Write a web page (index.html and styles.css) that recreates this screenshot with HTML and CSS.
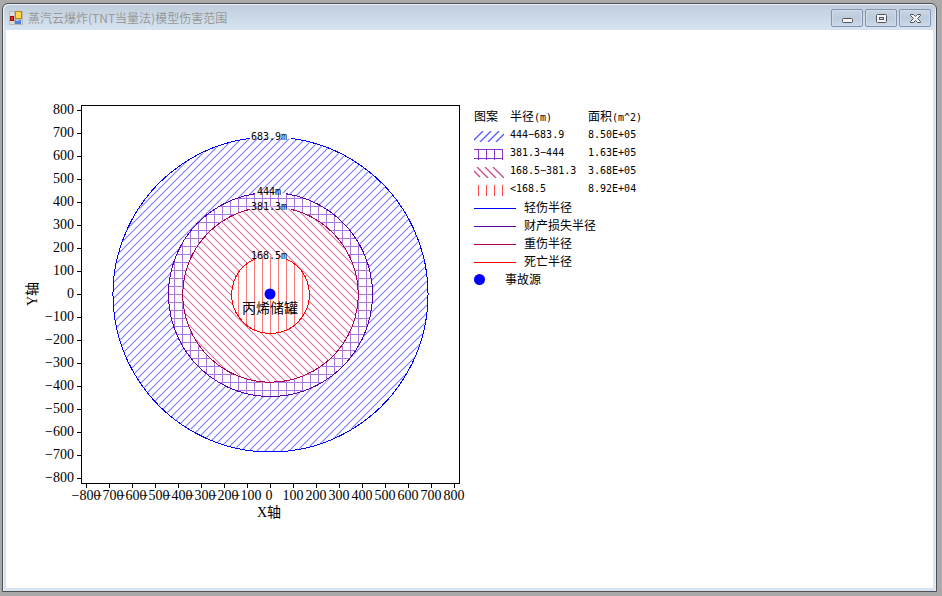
FILE: index.html
```html
<!DOCTYPE html>
<html lang="zh-CN">
<head>
<meta charset="utf-8">
<title>蒸汽云爆炸(TNT当量法)模型伤害范围</title>
<link rel="stylesheet" href="styles.css">
</head>
<body>
<div class="window">
  <header class="titlebar">
    <svg class="app-icon" width="14" height="14" viewBox="0 0 14 14" aria-hidden="true">
      <path d="M.5 4.500V.5H13.500V13.500H.5Z" fill="#dcdcdc" stroke="#b8b8b8"/>
      <path d="M5.500 1v12M1 8.500h12" stroke="#b8b8b8"/>
      <rect x="6.500" y=".5" width="6" height="7" fill="#ffd54a" stroke="#b88a12"/>
      <rect x="1.500" y="5.500" width="3" height="4" fill="#e03020" stroke="#980c0c"/>
      <rect x="6" y="9" width="6" height="4" fill="#4f82d8"/>
      <rect x="7" y="9" width="3" height="1" fill="#a8c8f8"/>
    </svg>
    <h1 class="title">蒸汽云爆炸(TNT当量法)模型伤害范围</h1>
    <div class="controls">
      <button type="button" class="control" aria-label="最小化">
        <svg width="13" height="11" viewBox="0 0 13 11"><rect x="1.500" y="5.500" width="10" height="4" rx="1" fill="#f4f4f4" stroke="#50545e"/></svg>
      </button>
      <button type="button" class="control" aria-label="最大化">
        <svg width="13" height="11" viewBox="0 0 13 11"><rect x="1.500" y="1.500" width="10" height="8" rx="1" fill="#f4f4f4" stroke="#50545e"/><rect x="4.500" y="4.500" width="4" height="2" fill="#c8d4e2" stroke="#50545e"/></svg>
      </button>
      <button type="button" class="control" aria-label="关闭">
        <svg width="13" height="11" viewBox="0 0 13 11"><path d="M1.500 1.500h3l2 2 2-2h3v1L8.500 5.500l3 3v1h-3l-2-2-2 2h-3v-1l3-3-3-3z" fill="#f4f4f4" stroke="#50545e"/></svg>
      </button>
    </div>
  </header>
  <main class="client">
    <svg class="chart" width="448" height="428" viewBox="24 100 448 428" role="img" aria-label="伤害范围图">
      <defs>
        <pattern id="hatch-minor" x="2" y="2" width="8" height="8" patternUnits="userSpaceOnUse">
          <path d="M-1 9L9-1M-1 1L1-1M7 9L9 7" stroke="#8080ff" stroke-width="1.2"/>
        </pattern>
        <pattern id="hatch-property" x="6" y="6" width="8" height="8" patternUnits="userSpaceOnUse">
          <path d="M0 .5H8M.5 0V8" stroke="#aa77dd"/>
        </pattern>
        <pattern id="hatch-severe" x="6" y="6" width="8" height="8" patternUnits="userSpaceOnUse">
          <path d="M-1-1L9 9M-1 7L1 9M7-1L9 1" stroke="#dd77a4" stroke-width="1.2"/>
        </pattern>
        <pattern id="hatch-death" x="6" y="6" width="8" height="8" patternUnits="userSpaceOnUse">
          <path d="M.5 0V8" stroke="#ff7777"/>
        </pattern>
      </defs>

      <!-- plot frame and tick marks -->
      <g class="axis-line">
        <rect x="81.500" y="105.500" width="378" height="378"/>
        <path d="M77 110.500h4M77 133.500h4M77 156.500h4M77 179.500h4M77 202.500h4M77 225.500h4M77 248.500h4M77 271.500h4M77 294.500h4M77 317.500h4M77 340.500h4M77 363.500h4M77 386.500h4M77 409.500h4M77 432.500h4M77 455.500h4M77 478.500h4"/>
        <path d="M86.500 484v4M109.500 484v4M132.500 484v4M155.500 484v4M178.500 484v4M201.500 484v4M224.500 484v4M247.500 484v4M270.500 484v4M293.500 484v4M316.500 484v4M339.500 484v4M362.500 484v4M385.500 484v4M408.500 484v4M431.500 484v4M454.500 484v4"/>
      </g>

      <!-- damage zones, outermost first -->
      <circle cx="270.500" cy="294.500" r="157" fill="url(#hatch-minor)"/>
      <circle cx="270.500" cy="294.500" r="102" fill="#fff"/>
      <circle cx="270.500" cy="294.500" r="102" fill="url(#hatch-property)"/>
      <circle cx="270.500" cy="294.500" r="88" fill="#fff"/>
      <circle cx="270.500" cy="294.500" r="88" fill="url(#hatch-severe)"/>
      <circle cx="270.500" cy="294.500" r="39" fill="#fff"/>
      <circle cx="270.500" cy="294.500" r="39" fill="url(#hatch-death)"/>

      <!-- outlines, open at the top for their labels -->
      <g class="outline">
        <path stroke="#00f" d="M291.500 138.400A157.500 157.500 0 1 1 249.500 138.400"/>
        <path stroke="#50a" d="M285.500 193.600A102 102 0 1 1 255.500 193.600"/>
        <path stroke="#a05" d="M291.500 209.400A87.700 87.700 0 1 1 249.500 209.400"/>
        <path stroke="#f00" d="M286.500 259.200A38.800 38.800 0 1 1 254.500 259.200"/>
      </g>
      <circle cx="270" cy="294" r="5.500" fill="#00f"/>

      <g class="zone-label">
        <text x="269" y="140">683.9m</text>
        <text x="269" y="195">444m</text>
        <text x="269" y="210">381.3m</text>
        <text x="269" y="259">168.5m</text>
      </g>
      <text class="source-label" x="270" y="313">丙烯储罐</text>

      <g class="y-scale">
        <text x="74" y="114">800</text><text x="74" y="137">700</text><text x="74" y="160">600</text>
        <text x="74" y="183">500</text><text x="74" y="206">400</text><text x="74" y="229">300</text>
        <text x="74" y="252">200</text><text x="74" y="275">100</text><text x="74" y="298">0</text>
        <text x="74" y="321">−100</text><text x="74" y="344">−200</text><text x="74" y="367">−300</text>
        <text x="74" y="390">−400</text><text x="74" y="413">−500</text><text x="74" y="436">−600</text>
        <text x="74" y="459">−700</text><text x="74" y="482">−800</text>
      </g>
      <g class="x-scale">
        <text x="86" y="500">−800</text><text x="109" y="500">−700</text><text x="132" y="500">−600</text>
        <text x="155" y="500">−500</text><text x="178" y="500">−400</text><text x="201" y="500">−300</text>
        <text x="224" y="500">−200</text><text x="247" y="500">−100</text><text x="269" y="500">0</text>
        <text x="293" y="500">100</text><text x="316" y="500">200</text><text x="339" y="500">300</text>
        <text x="362" y="500">400</text><text x="385" y="500">500</text><text x="408" y="500">600</text>
        <text x="431" y="500">700</text><text x="454" y="500">800</text>
      </g>
      <text class="axis-name" x="269" y="517">X轴</text>
      <text class="axis-name" transform="translate(37 294) rotate(-90)">Y轴</text>
    </svg>

    <section class="legend">
      <table class="zones">
        <thead>
          <tr><th class="col-pattern">图案</th><th class="col-radius">半径<span class="mono">(m)</span></th><th>面积<span class="mono">(m^2)</span></th></tr>
        </thead>
        <tbody>
          <tr>
            <td><svg class="swatch" width="30" height="11" viewBox="0 0 30 11"><path stroke="#55f" stroke-width="1.3" d="M0 9L9 0M6 11L17 0M14 11L25 0M22 11L30 3"/></svg></td>
            <td class="mono">444−683.9</td><td class="mono">8.50E+05</td>
          </tr>
          <tr>
            <td><svg class="swatch" width="30" height="11" viewBox="0 0 30 11"><path stroke="#83c" d="M0 .5H29M0 9.500H29M4.500 0V11M12.500 0V11M20.500 0V11M28.500 0V11"/></svg></td>
            <td class="mono">381.3−444</td><td class="mono">1.63E+05</td>
          </tr>
          <tr>
            <td><svg class="swatch" width="30" height="11" viewBox="0 0 30 11"><path stroke="#c48" stroke-width="1.3" d="M0 4L6 10M3 0L14 11M11 0L22 11M19 0L30 11"/></svg></td>
            <td class="mono">168.5−381.3</td><td class="mono">3.68E+05</td>
          </tr>
          <tr>
            <td><svg class="swatch" width="30" height="11" viewBox="0 0 30 11"><path stroke="#f44" d="M4.500 0V11M12.500 0V11M20.500 0V11M28.500 0V11"/></svg></td>
            <td class="mono">&lt;168.5</td><td class="mono">8.92E+04</td>
          </tr>
        </tbody>
      </table>
      <ul class="lines">
        <li><span class="rule minor"></span>轻伤半径</li>
        <li><span class="rule property"></span>财产损失半径</li>
        <li><span class="rule severe"></span>重伤半径</li>
        <li><span class="rule death"></span>死亡半径</li>
        <li class="source"><span class="dot"></span>事故源</li>
      </ul>
    </section>
  </main>
</div>
</body>
</html>
```
FILE: styles.css
```css
* {
  box-sizing: border-box;
}

body {
  margin: 0;
  padding: 3px 5px 4px 2px;
  min-height: 100vh;
  display: flex;
  background: #a9a9a9;
  font-family: "Noto Sans CJK SC", sans-serif;
  font-size: 12px;
  color: #000;
}

.window {
  flex: 1;
  display: flex;
  flex-direction: column;
  padding: 0 3px 3px;
  border: 1px solid #505050;
  border-radius: 6px 6px 0 0;
  background: linear-gradient(#bfcddb, #d7e4f1 26px);
  box-shadow: inset 1px 1px #eef3f8, inset -1px 0 #e4ecf4;
}

.titlebar {
  display: flex;
  align-items: center;
  height: 26px;
  padding: 2px 2px 0 3px;
}

.app-icon {
  margin-right: 5px;
}

.title {
  flex: 1;
  margin: 0;
  font-size: 12px;
  font-weight: 400;
  line-height: 18px;
  color: #999;
}

.controls {
  display: flex;
  gap: 2px;
}

.control {
  display: flex;
  align-items: center;
  justify-content: center;
  width: 32px;
  height: 18px;
  padding: 0;
  border: 1px solid #8592b0;
  border-radius: 2px;
  background: linear-gradient(#c8d5e3, #bccbdc 50%, #ccd9e7);
  box-shadow: inset 0 0 0 1px #cfdbe8;
}

.client {
  flex: 1;
  display: flex;
  align-items: flex-start;
  gap: 2px;
  padding: 70px 18px 0;
  background: #fff;
}

.chart {
  flex: none;
}

.axis-line {
  fill: none;
  stroke: #000;
  shape-rendering: crispEdges;
}

.outline {
  fill: none;
  shape-rendering: crispEdges;
}

.zone-label,
.mono {
  font-family: "DejaVu Sans Mono", monospace;
  font-size: 10px;
}

.zone-label,
.source-label,
.x-scale,
.axis-name {
  text-anchor: middle;
}

.source-label {
  font-size: 14px;
}

.x-scale,
.y-scale,
.axis-name {
  font-family: "Liberation Serif", "Noto Sans CJK SC", serif;
  font-size: 14px;
}

.y-scale {
  text-anchor: end;
}

.legend {
  padding-top: 7px;
}

.zones {
  border-collapse: collapse;
  white-space: nowrap;
}

.zones th,
.zones td {
  height: 18px;
  padding: 0;
  font-weight: 400;
  line-height: 18px;
  text-align: left;
  vertical-align: top;
}

.zones th {
  height: 19px;
}

.zones th .mono {
  line-height: 10px;
}

.col-pattern {
  width: 36px;
}

.col-radius {
  width: 78px;
}

.swatch {
  display: block;
  margin-top: 5px;
}

.lines {
  margin: 0;
  padding: 0;
  list-style: none;
}

.lines li {
  display: flex;
  align-items: center;
  gap: 8px;
  height: 18px;
  line-height: 18px;
}

.rule {
  width: 42px;
  margin-top: 3px;
  border-top: 1px solid;
}

.minor {
  border-color: #00f;
}

.property {
  border-color: #50a;
}

.severe {
  border-color: #a05;
}

.death {
  border-color: #f00;
}

.lines .source {
  gap: 20px;
}

.dot {
  width: 11px;
  height: 11px;
  border-radius: 50%;
  background: #00f;
}
```
